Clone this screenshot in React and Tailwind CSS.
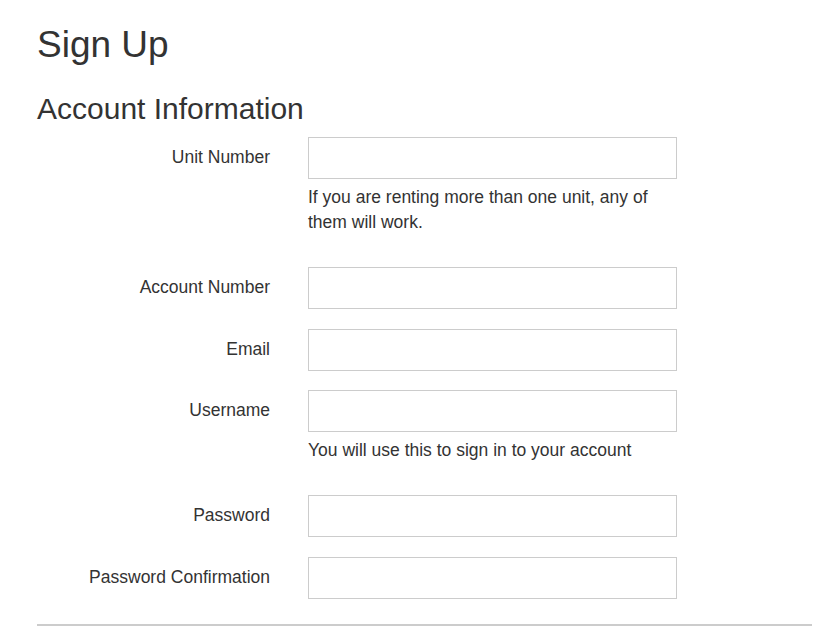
import React from 'react';

const fields = [
  { id: 'unit', label: 'Unit Number', help: 'If you are renting more than one unit, any of them will work.' },
  { id: 'account', label: 'Account Number' },
  { id: 'email', label: 'Email', type: 'email' },
  { id: 'username', label: 'Username', help: 'You will use this to sign in to your account' },
  { id: 'password', label: 'Password', type: 'password' },
  { id: 'password_confirmation', label: 'Password Confirmation', type: 'password' },
];

const FormRow = ({ field }) => {
  return (
    <div className={`flex ${field.help ? 'mb-[32px]' : 'mb-[19.5px]'}`}>
      <label
        htmlFor={field.id}
        className="w-[233px] shrink-0 pt-[8px] text-right leading-[25px]"
      >
        {field.label}
      </label>
      <div className="ml-[38px] w-[369px]">
        <input
          id={field.id}
          type={field.type || 'text'}
          className="block h-[42px] w-full border border-[#cccccc] bg-white px-3 outline-none"
        />
        {field.help && (
          <p className="mt-[6px] leading-[25px]">{field.help}</p>
        )}
      </div>
    </div>
  );
};

const App = () => {
  return (
    <div
      className="min-h-screen bg-white pl-[37px] pr-[4px] pt-[25px] text-[17.5px] text-[#333333]"
      style={{ fontFamily: '"Liberation Sans", Arial, sans-serif' }}
    >
      {/* Header */}
      <h1 className="text-[37px] leading-[40px]">Sign Up</h1>
      <h2 className="mt-[27px] text-[30px] leading-[33px]">Account Information</h2>

      {/* Fields */}
      <form className="mt-[12px]">
        {fields.map(field => (
          <FormRow key={field.id} field={field} />
        ))}
      </form>

      <div className="mt-[25px] border-t-2 border-[#cccccc]" />
    </div>
  );
};

export default App;
